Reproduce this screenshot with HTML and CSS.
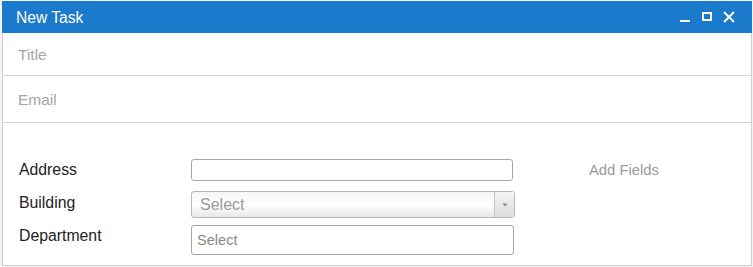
FILE: index.html
```html
<!DOCTYPE html>
<html>
<head>
<meta charset="utf-8">
<link rel="stylesheet" href="styles.css">
</head>
<body>
<div class="window">
  <div class="titlebar">
    <span class="title">New Task</span>
    <div class="actions">
      <svg class="icon" width="12" height="12" viewBox="0 0 12 12"><rect x="1" y="9" width="10" height="2" fill="#fff"/></svg>
      <svg class="icon" width="12" height="12" viewBox="0 0 12 12"><rect x="2" y="2" width="8" height="7" fill="none" stroke="#fff" stroke-width="2"/></svg>
      <svg class="icon" width="12" height="12" viewBox="0 0 12 12"><path d="M1 1 L11 11 M11 1 L1 11" stroke="#fff" stroke-width="1.9"/></svg>
    </div>
  </div>
  <div class="row row-title"><span class="ph">Title</span></div>
  <div class="row row-email"><span class="ph">Email</span></div>
  <div class="form">
    <div class="field f-address">
      <label>Address</label>
      <div class="input input-address"></div>
      <span class="add">Add Fields</span>
    </div>
    <div class="field f-building">
      <label>Building</label>
      <div class="select"><span class="sel-text">Select</span><span class="arrow"><svg width="8" height="6" viewBox="0 0 8 6"><path d="M1.5 1.5 L6.5 1.5 L4 4.5 Z" fill="#888"/></svg></span></div>
    </div>
    <div class="field f-dept">
      <label>Department</label>
      <div class="input input-dept"><span class="dept-ph">Select</span></div>
    </div>
  </div>
</div>
</body>
</html>
```
FILE: styles.css
```css
html, body { margin: 0; padding: 0; background: #fff; }
body { font-family: "Liberation Sans", Arial, sans-serif; width: 753px; height: 267px; overflow: hidden; background: #f4f4f4; }
.window {
  margin: 1px 0 0 2px;
  width: 748px;
  height: 264px;
  background: #fff;
  border: 1px solid #cfcfcf;
  border-top: none;
  box-sizing: content-box;
}
.titlebar {
  height: 32px;
  background: #1a7acb;
  margin: 0 -1px;
  display: flex;
  align-items: center;
  justify-content: space-between;
  padding: 0 17px 0 14px;
  color: #fff;
}
.title { font-size: 15.6px; position: relative; top: 1px; }
.actions { display: flex; gap: 10px; align-items: center; }
.icon { display: block; }
.row { display: flex; align-items: center; padding-left: 15px; border-bottom: 1px solid #d6d6d6; }
.row-title { height: 42px; }
.row-email { height: 46px; }
.ph { color: #a5a5a5; font-size: 15.5px; position: relative; top: 1px; }
.form { padding: 36px 0 0 16px; }
.field { display: flex; align-items: center; }
.field label { width: 172px; font-size: 15.8px; color: #222; }
.f-address { height: 22px; }
.f-building { height: 27px; margin-top: 10px; }
.f-dept { height: 30px; margin-top: 7px; }
.f-building label { position: relative; top: -2px; }
.f-dept label { position: relative; top: -4px; }
.input { border: 1px solid #a8a8a8; border-radius: 3px; box-sizing: border-box; background: #fff; }
.input-address { width: 322px; height: 22px; }
.input-dept { width: 323px; height: 30px; display: flex; align-items: center; padding-left: 5px; }
.dept-ph { color: #888; font-size: 14.6px; }
.add { margin-left: 76px; color: #9a9a9a; font-size: 14.8px; }
.select {
  width: 324px; height: 27px; box-sizing: border-box;
  border: 1px solid #b8b8b8; border-radius: 3px;
  background: linear-gradient(#f6f6f6, #ffffff 50%, #e8e8e8);
  display: flex; align-items: center; justify-content: space-between;
}
.sel-text { padding-left: 8px; color: #9a9a9a; font-size: 16px; }
.arrow { width: 19px; height: 100%; border-left: 1px solid #c6c6c6; display: flex; align-items: center; justify-content: center; background: linear-gradient(#f4f4f4, #dedede); }
```
